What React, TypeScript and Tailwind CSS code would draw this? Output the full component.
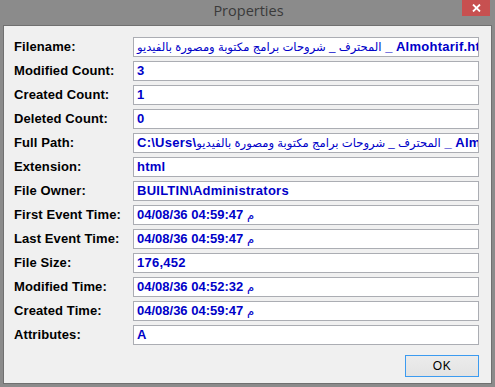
import React from "react";

const AR = "المحترف _ شروحات برامج مكتوبة ومصورة بالفيديو";

function Ar({ children }: { children: React.ReactNode }) {
  return <span className="font-normal text-[11.6px]">{children}</span>;
}

const rows: { label: string; value: React.ReactNode }[] = [
  { label: "Filename:", value: <>{<Ar>{AR}</Ar>} _ Almohtarif.html</> },
  { label: "Modified Count:", value: "3" },
  { label: "Created Count:", value: "1" },
  { label: "Deleted Count:", value: "0" },
  { label: "Full Path:", value: <>C:\Users\{<Ar>{AR}</Ar>} _ Almohtarif.html</> },
  { label: "Extension:", value: "html" },
  { label: "File Owner:", value: "BUILTIN\\Administrators" },
  { label: "First Event Time:", value: <>04/08/36 04:59:47 <Ar>م</Ar></> },
  { label: "Last Event Time:", value: <>04/08/36 04:59:47 <Ar>م</Ar></> },
  { label: "File Size:", value: "176,452" },
  { label: "Modified Time:", value: <>04/08/36 04:52:32 <Ar>م</Ar></> },
  { label: "Created Time:", value: <>04/08/36 04:59:47 <Ar>م</Ar></> },
  { label: "Attributes:", value: "A" },
];

export default function App() {
  return (
    <div className="w-[495px] h-[387px] bg-[#8b8b8b] flex flex-col font-['Liberation_Sans','DejaVu_Sans',sans-serif] overflow-hidden">
      <div className="h-[25px] relative flex items-start justify-center shrink-0">
        <span className="font-['Open_Sans',sans-serif] text-[14.5px] leading-[20px] text-[#3a3a3a] mt-[1px] pl-[2px]">
          Properties
        </span>
        <div className="absolute right-[5px] top-0 w-[28px] h-[16px] bg-[#c75050] flex items-center justify-center">
          <svg width="9" height="8" viewBox="0 0 9 8">
            <path d="M1 0.5 L8 7.5 M8 0.5 L1 7.5" stroke="#ffffff" strokeWidth="1.8" />
          </svg>
        </div>
      </div>
      <div className="flex-1 mx-[3px] mb-[3px] bg-[#f0f0f0] border border-[#707070] pt-[11px] pl-[10px] flex flex-col">
        <div className="w-[465px] grid grid-cols-[119px_346px] gap-y-[4px] items-center">
          {rows.map((r) => (
            <React.Fragment key={r.label}>
              <div className="text-[13px] font-bold tracking-[0.1px] text-black leading-[20px] whitespace-nowrap">
                {r.label}
              </div>
              <div className="h-[20px] bg-white border border-[#abadb3] pl-[3px] overflow-hidden whitespace-nowrap text-[13px] font-bold tracking-[0.25px] text-[#0000c8] leading-[18px]">
                {r.value}
              </div>
            </React.Fragment>
          ))}
        </div>
        <div className="w-[465px] flex justify-end mt-[10px]">
          <button className="w-[74px] h-[22px] border border-[#3c9bf0] bg-gradient-to-b from-[#ececec] to-[#e3e3e3] text-[12px] text-black font-['Liberation_Sans',sans-serif] flex items-center justify-center tracking-[0.5px]">
            OK
          </button>
        </div>
      </div>
    </div>
  );
}
